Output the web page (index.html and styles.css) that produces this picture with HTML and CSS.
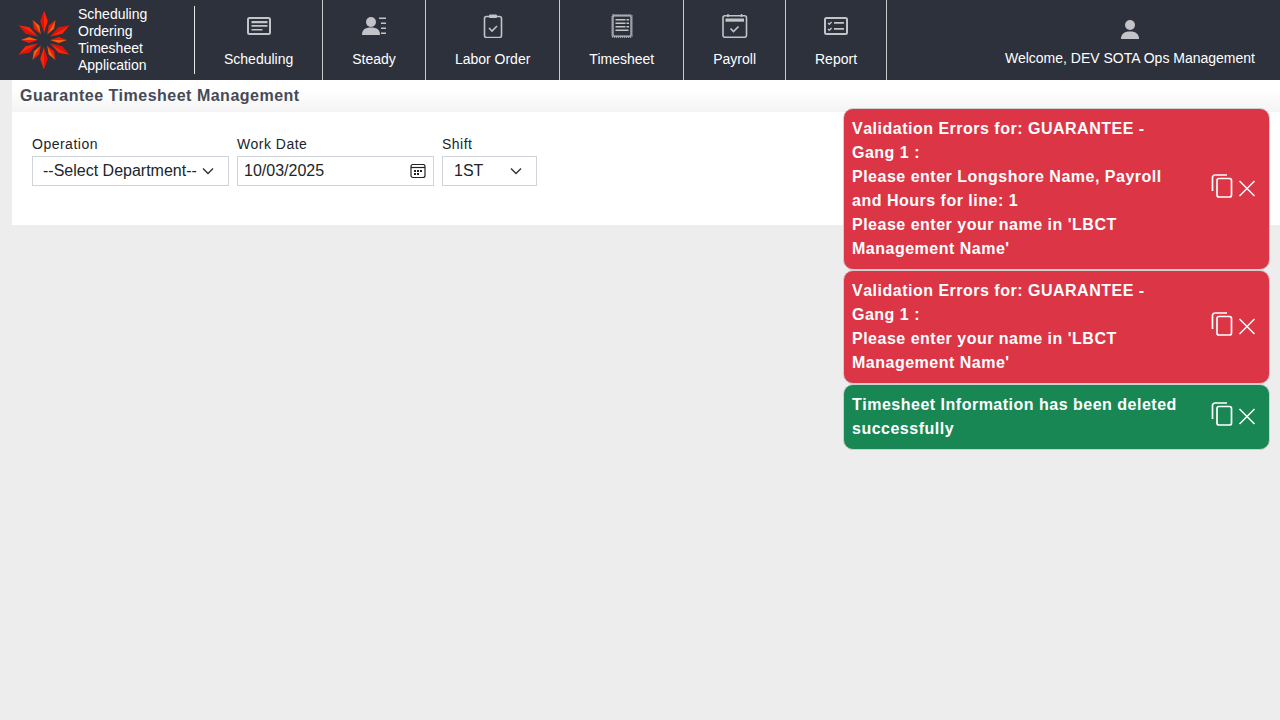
FILE: index.html
```html
<!DOCTYPE html>
<html lang="en">
<head>
<meta charset="utf-8">
<title>Guarantee Timesheet Management</title>
<link rel="stylesheet" href="styles.css">
</head>
<body>
<header class="topbar">
  <div class="brand">
    <svg class="logo" width="56" height="62" viewBox="-28 -31 56 62">
      <defs>
        <g id="spike"><polygon points="0,-29.500 -3.800,-19 0,-7" fill="#e0100a"/><polygon points="0,-29.500 3.800,-19 0,-7" fill="#ff2406"/></g>
        <g id="short"><polygon points="0,-29.500 -4,-19 0,-8" fill="#ee1a08"/><polygon points="0,-29.500 4,-19 0,-8" fill="#ff5a08"/></g>
      </defs>
      <use href="#spike"/>
      <use href="#short" transform="rotate(30) scale(.78)"/>
      <use href="#spike" transform="rotate(60)"/>
      <use href="#short" transform="rotate(90) scale(.78)"/>
      <use href="#spike" transform="rotate(120)"/>
      <use href="#short" transform="rotate(150) scale(.78)"/>
      <use href="#spike" transform="rotate(180)"/>
      <use href="#short" transform="rotate(210) scale(.78)"/>
      <use href="#spike" transform="rotate(240)"/>
      <use href="#short" transform="rotate(270) scale(.78)"/>
      <use href="#spike" transform="rotate(300)"/>
      <use href="#short" transform="rotate(330) scale(.78)"/>
    </svg>
    <div class="brand-text">Scheduling<br>Ordering<br>Timesheet<br>Application</div>
  </div>
  <nav class="nav">
    <a class="nav-item">
      <svg width="26" height="24" viewBox="0 0 26 24" class="ico"><rect x="2" y="4" width="22" height="16" rx="1.500" fill="none" stroke="#c3c3c8" stroke-width="2"/><path d="M5.500 7h16v2.200h-16zM5.500 11h16v1.800h-16zM5.500 15h11v1.600h-11z" fill="#c3c3c8"/></svg>
      <span>Scheduling</span>
    </a>
    <a class="nav-item">
      <svg width="26" height="24" viewBox="0 0 26 24" class="ico"><circle cx="10" cy="8" r="5" fill="#c3c3c8"/><path d="M1 21c0-5.500 3-7.500 9-7.500s9 2 9 7.500z" fill="#c3c3c8"/><path d="M18 3.500h7v1.600h-7zM20 8.500h5v1.600h-5zM20 13.500h5v1.600h-5zM20 18.500h5v1.600h-5z" fill="#c3c3c8"/></svg>
      <span>Steady</span>
    </a>
    <a class="nav-item">
      <svg width="20" height="24" viewBox="0 0 20 24" class="ico"><rect x="1.500" y="2.500" width="17" height="21" rx="2" fill="none" stroke="#c3c3c8" stroke-width="1.600"/><rect x="6" y="0.500" width="8" height="3.500" rx="1" fill="#c3c3c8"/><path d="M6 14l3 3 5-5" fill="none" stroke="#c3c3c8" stroke-width="1.600"/></svg>
      <span>Labor Order</span>
    </a>
    <a class="nav-item">
      <svg width="22" height="24" viewBox="0 0 22 24" class="ico"><rect x="1" y="0.800" width="20" height="22.400" rx="1.500" fill="none" stroke="#c3c3c8" stroke-width="1.200" stroke-dasharray="1.200 .8"/><rect x="2" y="1.800" width="18" height="20.400" rx="1" fill="none" stroke="#c3c3c8" stroke-width="1.200"/><path d="M4.500 5h10v1.600h-10zM4.500 8.500h10v1.600h-10zM4.500 12h10v1.600h-10zM4.500 15.500h13v1.600h-13zM15.500 5h2.500v1.600h-2.500zM15.500 8.500h2.500v1.600h-2.500zM15.500 12h2.500v1.600h-2.500z" fill="#c3c3c8"/></svg>
      <span>Timesheet</span>
    </a>
    <a class="nav-item">
      <svg width="26" height="24" viewBox="0 0 26 24" class="ico"><rect x="1" y="1.800" width="23.500" height="21.500" rx="2" fill="none" stroke="#c3c3c8" stroke-width="1.600"/><path d="M6 0v3M19.500 0v3" stroke="#c3c3c8" stroke-width="1.500"/><rect x="3.500" y="4.500" width="18.500" height="3.200" fill="#c3c3c8"/><path d="M8.500 14.500l3 3 5-5" fill="none" stroke="#c3c3c8" stroke-width="1.600"/></svg>
      <span>Payroll</span>
    </a>
    <a class="nav-item">
      <svg width="26" height="24" viewBox="0 0 26 24" class="ico"><rect x="2" y="4" width="22" height="16" rx="1.500" fill="none" stroke="#c3c3c8" stroke-width="2"/><path d="M5 9l1.300 1.300 2.300-2.300M5 15l1.300 1.300 2.300-2.300" fill="none" stroke="#c3c3c8" stroke-width="1.300"/><path d="M11 8h10v1.800H11zM11 14h10v1.800H11z" fill="#c3c3c8"/></svg>
      <span>Report</span>
    </a>
  </nav>
  <div class="welcome">
    <svg width="20" height="19" viewBox="0 0 20 19" class="ico"><circle cx="10" cy="5" r="5" fill="#c3c3c8"/><path d="M1 19c0-5 3-7.500 9-7.500s9 2.500 9 7.500z" fill="#c3c3c8"/></svg>
    <span>Welcome, DEV SOTA Ops Management</span>
  </div>
</header>
<main class="page">
  <h1 class="page-title">Guarantee Timesheet Management</h1>
  <section class="card">
    <div class="filters">
      <div class="field field-wide">
        <label>Operation</label>
        <div class="control"><span>--Select Department--</span><svg width="12" height="8" viewBox="0 0 12 8"><path d="M1 1.500l5 5 5-5" fill="none" stroke="#333" stroke-width="1.400"/></svg></div>
      </div>
      <div class="field field-wide">
        <label>Work Date</label>
        <div class="control date"><span>10/03/2025</span><svg width="16" height="15" viewBox="0 1 16 15"><rect x="1" y="1.500" width="14" height="13" rx="2" fill="none" stroke="#222" stroke-width="1.200"/><path d="M1 4.500h14" stroke="#222" stroke-width="1.200"/><path d="M4 7h2v2H4zM7 7h2v2H7zM10 7h2v2h-2zM4 10h2v2H4zM7 10h2v2H7z" fill="#222"/></svg></div>
      </div>
      <div class="field field-shift">
        <label>Shift</label>
        <div class="control shift"><span>1ST</span><svg width="12" height="8" viewBox="0 0 12 8"><path d="M1 1.500l5 5 5-5" fill="none" stroke="#333" stroke-width="1.400"/></svg></div>
      </div>
    </div>
  </section>
</main>
<aside class="toasts">
  <div class="toast danger">
    <div class="toast-msg">Validation Errors for: GUARANTEE - Gang 1 :<br>Please enter Longshore Name, Payroll and Hours for line: 1<br>Please enter your name in 'LBCT Management Name'</div>
    <svg class="toast-ico" width="48" height="24" viewBox="0 0 48 24"><rect x="6" y="4.500" width="14.500" height="18.500" rx="2" fill="none" stroke="#fff" stroke-width="1.700"/><path d="M1.500 17V3.500a2.500 2.500 0 0 1 2.500-2.500h12" fill="none" stroke="#fff" stroke-width="1.700"/><path d="M28.500 7l15 15M43.500 7l-15 15" stroke="#fff" stroke-width="1.500"/></svg>
  </div>
  <div class="toast danger">
    <div class="toast-msg">Validation Errors for: GUARANTEE - Gang 1 :<br>Please enter your name in 'LBCT Management Name'</div>
    <svg class="toast-ico" width="48" height="24" viewBox="0 0 48 24"><rect x="6" y="4.500" width="14.500" height="18.500" rx="2" fill="none" stroke="#fff" stroke-width="1.700"/><path d="M1.500 17V3.500a2.500 2.500 0 0 1 2.500-2.500h12" fill="none" stroke="#fff" stroke-width="1.700"/><path d="M28.500 7l15 15M43.500 7l-15 15" stroke="#fff" stroke-width="1.500"/></svg>
  </div>
  <div class="toast success">
    <div class="toast-msg">Timesheet Information has been deleted successfully</div>
    <svg class="toast-ico" width="48" height="24" viewBox="0 0 48 24"><rect x="6" y="4.500" width="14.500" height="18.500" rx="2" fill="none" stroke="#fff" stroke-width="1.700"/><path d="M1.500 17V3.500a2.500 2.500 0 0 1 2.500-2.500h12" fill="none" stroke="#fff" stroke-width="1.700"/><path d="M28.500 7l15 15M43.500 7l-15 15" stroke="#fff" stroke-width="1.500"/></svg>
  </div>
</aside>
</body>
</html>
```
FILE: styles.css
```css
* { box-sizing: border-box; }
html, body { margin: 0; height: 100%; }
body {
  background: #ededed;
  font-family: "Liberation Sans", Arial, sans-serif;
  color: #212529;
  overflow: hidden;
}
.topbar {
  display: flex;
  height: 80px;
  background: #2d313c;
  color: #fff;
  font-size: 14px;
}
.brand {
  display: flex;
  align-items: center;
  width: 195px;
  height: 68px;
  margin-top: 6px;
  padding-left: 16px;
  border-right: 1px solid #e6e6e6;
}
.logo { flex: none; margin-top: -1px; }
.brand-text {
  margin-left: 6px;
  line-height: 17px;
  font-size: 14px;
}
.nav { display: flex; }
.nav-item {
  display: flex;
  flex-direction: column;
  align-items: center;
  height: 80px;
  padding: 0 29px;
  border-right: 1px solid #c9c9cc;
}
.nav-item span {
  margin-top: auto;
  margin-bottom: 13px;
  white-space: nowrap;
  line-height: 16px;
}
.ico { margin-top: 14px; flex: none; }
.welcome {
  margin-left: auto;
  padding-right: 25px;
  display: flex;
  flex-direction: column;
  align-items: center;
}
.welcome .ico { margin-top: 20px; }
.welcome span { margin-top: auto; margin-bottom: 14px; line-height: 16px; }
.page { padding-left: 12px; }
.page-title {
  margin: 0;
  height: 32px;
  padding: 7px 8px 0;
  font-size: 16px;
  line-height: 18px;
  font-weight: 700;
  letter-spacing: 0.5px;
  color: #454a56;
  background: linear-gradient(#fff, #fff 30%, #f4f4f4);
}
.card {
  height: 113px;
  background: #fff;
  padding: 23px 20px 0;
}
.filters { display: flex; gap: 8px; }
.field { display: flex; flex-direction: column; }
.field-wide { width: 197px; }
.field-shift { width: 95px; }
.field label {
  font-size: 14px;
  line-height: 18px;
  letter-spacing: 0.5px;
  color: #212529;
}
.control {
  display: flex;
  align-items: center;
  justify-content: space-between;
  height: 30px;
  margin-top: 3px;
  padding: 0 14px 0 10px;
  border: 1px solid #ced4da;
  font-size: 16px;
  color: #212529;
}
.control.date { padding: 0 7px 0 6px; }
.control.shift { padding: 0 14px 0 11px; }
.toasts {
  position: absolute;
  top: 108px;
  right: 10px;
  width: 427px;
  display: flex;
  flex-direction: column;
}
.toast {
  display: flex;
  align-items: center;
  justify-content: space-between;
  padding: 8px 10px 8px 8px;
  border: 1px solid #cfcfcf;
  border-radius: 10px;
  color: #fff;
  font-size: 16px;
  font-weight: 700;
  line-height: 24px;
  letter-spacing: 0.5px;
  font-kerning: none;
}
.danger { background: #dc3545; }
.success { background: #198754; }
.toast-msg { width: 330px; }
.toast-ico { flex: none; margin-bottom: 6px; }
```
